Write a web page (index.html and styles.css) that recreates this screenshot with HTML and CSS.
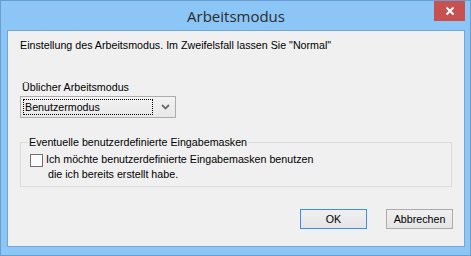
FILE: index.html
```html
<!DOCTYPE html>
<html lang="de">
<head>
    <meta charset="UTF-8">
    <title>Arbeitsmodus</title>
    <link rel="stylesheet" href="styles.css">
</head>
<body>
    <div class="window">
        <div class="titlebar">
            <span class="title">Arbeitsmodus</span>
            <button class="close" aria-label="Schließen">
                <svg width="10" height="10" viewBox="0 0 10 10">
                    <path d="M1.5 1.5 L8.5 8.5 M8.5 1.5 L1.5 8.5" stroke="#fff" stroke-width="2"/>
                </svg>
            </button>
        </div>
        <div class="client">
            <p class="intro">Einstellung des Arbeitsmodus. Im Zweifelsfall lassen Sie "Normal"</p>
            <div class="label">Üblicher Arbeitsmodus</div>
            <div class="combo">
                <span class="combo-value">Benutzermodus</span>
                <svg class="chevron" width="9" height="6" viewBox="0 0 9 6">
                    <path d="M1 1 L4.5 4.5 L8 1" fill="none" stroke="#6d6d6d" stroke-width="1.8"/>
                </svg>
            </div>
            <fieldset class="group">
                <legend>Eventuelle benutzerdefinierte Eingabemasken</legend>
                <div class="check-row">
                    <span class="checkbox"></span>
                    <div class="check-text">
                        <div>Ich möchte benutzerdefinierte Eingabemasken benutzen</div>
                        <div class="second">die ich bereits erstellt habe.</div>
                    </div>
                </div>
            </fieldset>
            <div class="buttons">
                <button class="btn default">OK</button>
                <button class="btn">Abbrechen</button>
            </div>
        </div>
    </div>
</body>
</html>
```

FILE: styles.css
```css
body {
    margin: 0;
    font-family: "Liberation Sans", Arial, sans-serif;
    font-size: 10.7px;
    color: #000;
}
.window {
    width: 471px;
    height: 256px;
    box-sizing: border-box;
    border: 1px solid #6b9dcf;
    background: #8bc6f6;
    padding: 0 5px 8px 6px;
    display: flex;
    flex-direction: column;
}
.titlebar {
    height: 29px;
    display: flex;
    align-items: center;
    justify-content: center;
    position: relative;
}
.title {
    font-family: "Open Sans", sans-serif;
    font-size: 15px;
    color: #2b2b2b;
    margin-top: 1px;
}
.close {
    position: absolute;
    top: 0;
    right: 0;
    width: 31px;
    height: 20px;
    border: none;
    padding: 0;
    background: #c75050;
    display: flex;
    align-items: center;
    justify-content: center;
}
.client {
    flex: 1;
    border: 1px solid #73a6d6;
    background: #f0f0f0;
    padding: 8px 11px 0 12px;
}
.intro {
    margin: 0;
    line-height: 13px;
}
.label {
    margin-top: 29px;
    line-height: 13px;
    padding-left: 2px;
}
.combo {
    margin-top: 2px;
    width: 156px;
    height: 22px;
    box-sizing: border-box;
    border: 1px solid #acacac;
    background: linear-gradient(#f2f2f2, #e8e8e8);
    display: flex;
    align-items: center;
    padding: 0 5px 0 2px;
}
.combo-value {
    flex: 1;
    border: 1px dotted #000;
    height: 16px;
    line-height: 15px;
    box-sizing: border-box;
    padding-left: 1px;
    margin-right: 8px;
}
.group {
    margin: 18px 0 0;
    width: 432px;
    box-sizing: border-box;
    border: 1px solid #dcdcdc;
    padding: 3px 8px 4px 9px;
}
.group legend {
    padding: 0 1px;
    margin-left: -2px;
    line-height: 13px;
}
.check-row {
    display: flex;
    align-items: flex-start;
}
.checkbox {
    width: 13px;
    height: 13px;
    box-sizing: border-box;
    border: 1px solid #707070;
    background: #fbfbfb;
    margin-top: 2px;
    margin-right: 3px;
}
.check-text {
    line-height: 15px;
}
.check-text .second {
    padding-left: 2px;
}
.buttons {
    margin-top: 22px;
    display: flex;
    justify-content: flex-end;
    gap: 19px;
}
.btn {
    width: 67px;
    height: 20px;
    padding: 0;
    font-family: "Liberation Sans", Arial, sans-serif;
    font-size: 10.7px;
    color: #000;
    border: 1px solid #acacac;
    background: linear-gradient(#f0f0f0, #e5e5e5);
}
.btn.default {
    border-color: #3c8ee6;
}
```
